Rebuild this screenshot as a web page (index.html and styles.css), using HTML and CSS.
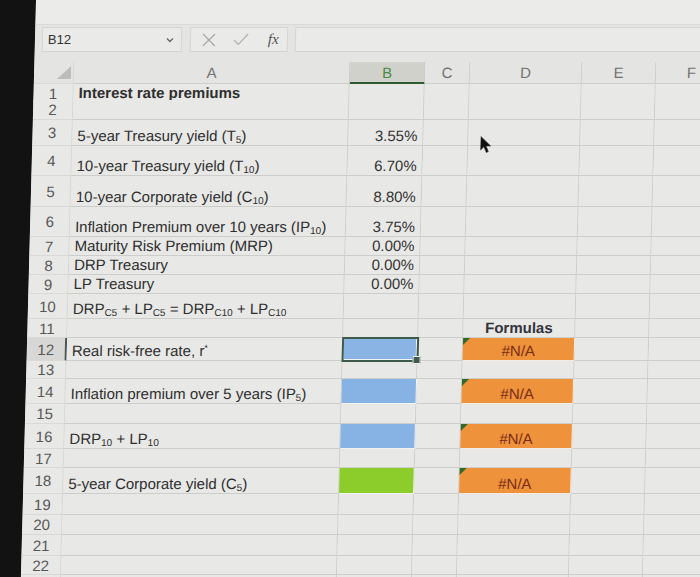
FILE: index.html
```html
<!DOCTYPE html>
<html>
<head>
<meta charset="utf-8">
<link rel="stylesheet" href="styles.css">
</head>
<body>
<div class="screen">
  <div class="ribbon"></div>
  <div class="fbar">
    <div class="namebox"><span>B12</span>
      <svg class="chev" width="8" height="6" viewBox="0 0 8 6"><path d="M1 1.5 L4 4.5 L7 1.5" fill="none" stroke="#666" stroke-width="1.3"/></svg>
    </div>
    <div class="fxbox">
      <svg width="14" height="14" viewBox="0 0 14 14"><path d="M1 1 L13 13 M13 1 L1 13" stroke="#a8a8a6" stroke-width="1.2" fill="none"/></svg>
      <svg width="16" height="13" viewBox="0 0 16 13"><path d="M1 7 L5.5 11.5 L15 1" stroke="#b0b0ae" stroke-width="1.2" fill="none"/></svg>
      <span class="fx">fx</span>
    </div>
    <div class="finput"></div>
  </div>

  <div class="sheet">
    <div class="row hdr">
      <div class="c rh corner"><svg width="14" height="13" viewBox="0 0 14 13"><path d="M14 0 L14 13 L0 13 Z" fill="#bcbcba"/></svg></div>
      <div class="c col">A</div><div class="c col csel">B</div><div class="c col">C</div><div class="c col">D</div><div class="c col">E</div><div class="c col">F</div>
    </div>
    <div class="row h16">
      <div class="c rh">1</div><div class="c"><b>Interest rate premiums</b></div><div class="c"></div><div class="c"></div><div class="c"></div><div class="c"></div><div class="c"></div>
    </div>
    <div class="row h20">
      <div class="c rh">2</div><div class="c"></div><div class="c"></div><div class="c"></div><div class="c"></div><div class="c"></div><div class="c"></div>
    </div>
    <div class="row h26">
      <div class="c rh">3</div><div class="c"><span>5-year Treasury yield (T<sub>5</sub>)</span></div><div class="c num">3.55%</div><div class="c"></div><div class="c"></div><div class="c"></div><div class="c"></div>
    </div>
    <div class="row h30">
      <div class="c rh">4</div><div class="c"><span>10-year Treasury yield (T<sub>10</sub>)</span></div><div class="c num">6.70%</div><div class="c"></div><div class="c"></div><div class="c"></div><div class="c"></div>
    </div>
    <div class="row h31">
      <div class="c rh">5</div><div class="c"><span>10-year Corporate yield (C<sub>10</sub>)</span></div><div class="c num">8.80%</div><div class="c"></div><div class="c"></div><div class="c"></div><div class="c"></div>
    </div>
    <div class="row h30">
      <div class="c rh">6</div><div class="c"><span>Inflation Premium over 10 years (IP<sub>10</sub>)</span></div><div class="c num">3.75%</div><div class="c"></div><div class="c"></div><div class="c"></div><div class="c"></div>
    </div>
    <div class="row h19">
      <div class="c rh">7</div><div class="c">Maturity Risk Premium (MRP)</div><div class="c num">0.00%</div><div class="c"></div><div class="c"></div><div class="c"></div><div class="c"></div>
    </div>
    <div class="row h19">
      <div class="c rh">8</div><div class="c">DRP Treasury</div><div class="c num">0.00%</div><div class="c"></div><div class="c"></div><div class="c"></div><div class="c"></div>
    </div>
    <div class="row h19">
      <div class="c rh">9</div><div class="c">LP Treasury</div><div class="c num">0.00%</div><div class="c"></div><div class="c"></div><div class="c"></div><div class="c"></div>
    </div>
    <div class="row h25">
      <div class="c rh">10</div><div class="c"><span>DRP<sub>C5</sub> + LP<sub>C5</sub> = DRP<sub>C10</sub> + LP<sub>C10</sub></span></div><div class="c"></div><div class="c"></div><div class="c"></div><div class="c"></div><div class="c"></div>
    </div>
    <div class="row h19">
      <div class="c rh">11</div><div class="c"></div><div class="c"></div><div class="c"></div><div class="c mid"><b class="formulas">Formulas</b></div><div class="c"></div><div class="c"></div>
    </div>
    <div class="row h23">
      <div class="c rh rsel">12</div><div class="c"><span>Real risk-free rate, r<sup>*</sup></span></div><div class="c selected"></div><div class="c"></div><div class="c err">#N/A</div><div class="c"></div><div class="c"></div>
    </div>
    <div class="row h18">
      <div class="c rh">13</div><div class="c"></div><div class="c"></div><div class="c"></div><div class="c"></div><div class="c"></div><div class="c"></div>
    </div>
    <div class="row h25">
      <div class="c rh">14</div><div class="c"><span>Inflation premium over 5 years (IP<sub>5</sub>)</span></div><div class="c blue"></div><div class="c"></div><div class="c err">#N/A</div><div class="c"></div><div class="c"></div>
    </div>
    <div class="row h20">
      <div class="c rh">15</div><div class="c"></div><div class="c"></div><div class="c"></div><div class="c"></div><div class="c"></div><div class="c"></div>
    </div>
    <div class="row h25">
      <div class="c rh">16</div><div class="c"><span>DRP<sub>10</sub> + LP<sub>10</sub></span></div><div class="c blue"></div><div class="c"></div><div class="c err">#N/A</div><div class="c"></div><div class="c"></div>
    </div>
    <div class="row h19">
      <div class="c rh">17</div><div class="c"></div><div class="c"></div><div class="c"></div><div class="c"></div><div class="c"></div><div class="c"></div>
    </div>
    <div class="row h26">
      <div class="c rh">18</div><div class="c"><span>5-year Corporate yield (C<sub>5</sub>)</span></div><div class="c green"></div><div class="c"></div><div class="c err">#N/A</div><div class="c"></div><div class="c"></div>
    </div>
    <div class="row h21">
      <div class="c rh">19</div><div class="c"></div><div class="c"></div><div class="c"></div><div class="c"></div><div class="c"></div><div class="c"></div>
    </div>
    <div class="row h20">
      <div class="c rh">20</div><div class="c"></div><div class="c"></div><div class="c"></div><div class="c"></div><div class="c"></div><div class="c"></div>
    </div>
    <div class="row h21">
      <div class="c rh">21</div><div class="c"></div><div class="c"></div><div class="c"></div><div class="c"></div><div class="c"></div><div class="c"></div>
    </div>
    <div class="row h19">
      <div class="c rh">22</div><div class="c"></div><div class="c"></div><div class="c"></div><div class="c"></div><div class="c"></div><div class="c"></div>
    </div>
    <div class="row h20">
      <div class="c rh">23</div><div class="c"></div><div class="c"></div><div class="c"></div><div class="c"></div><div class="c"></div><div class="c"></div>
    </div>
  </div>

  <svg class="cursor" width="12" height="18" viewBox="0 0 12 18"><path d="M0.5 0.5 L0.5 14 L3.8 10.8 L6.3 16.5 L8.3 15.6 L5.9 10 L10.5 10 Z" fill="#111" stroke="#333" stroke-width="0.6"/></svg>
</div>
</body>
</html>
```

FILE: styles.css
```css
* { box-sizing: border-box; }
html, body { margin: 0; height: 100%; }
body {
  background: #121212;
  overflow: hidden;
  font-family: "Liberation Sans", Arial, sans-serif;
}
.screen {
  margin-left: 36px;
  width: 700px;
  height: 577px;
  background: #e6e6e4;
  transform: skewX(-1.5deg);
  transform-origin: 0 0;
  position: relative;
  overflow: hidden;
}
.ribbon {
  height: 25px;
  background: #ebebe9;
  border-bottom: 1px solid #dadad8;
}
.fbar {
  height: 37px;
  display: flex;
  align-items: flex-start;
  padding: 2px 0 0 7px;
  background: #e4e4e2;
}
.namebox, .fxbox, .finput {
  height: 25px;
  background: #eaeae8;
  border: 1px solid #d4d4d2;
}
.namebox {
  width: 140px;
  display: flex;
  align-items: center;
  justify-content: space-between;
  padding: 0 7px 0 5px;
  font-size: 13px;
  color: #333;
}
.fxbox {
  width: 98px;
  margin-left: 8px;
  display: flex;
  align-items: center;
  gap: 17px;
  padding-left: 11px;
}
.fx {
  font-family: "Liberation Serif", "Times New Roman", serif;
  font-style: italic;
  font-size: 15px;
  color: #555;
  margin-left: 2px;
}
.finput { flex: 1; margin-left: 7px; }

.row {
  display: grid;
  grid-template-columns: 40px 276px 75px 45px 112px 74px 72px;
}
.hdr { height: 22px; }
.h16 { height: 16px; }
.h18 { height: 18px; }
.h19 { height: 19px; }
.h20 { height: 20px; }
.h21 { height: 21px; }
.h23 { height: 23px; }
.h25 { height: 25px; }
.h26 { height: 26px; }
.h30 { height: 30px; }
.h31 { height: 31px; }

.c {
  position: relative;
  display: flex;
  align-items: flex-end;
  padding: 0 5px 1px 5px;
  border-right: 1px solid #cdcdcb;
  border-bottom: 1px solid #cdcdcb;
  font-size: 15px;
  line-height: 17px;
  color: #2f2f2f;
  white-space: nowrap;
  background: #e8e8e6;
}
.c.h16 { padding-bottom: 0; }
.c.rh {
  justify-content: center;
  align-items: center;
  padding: 0;
  color: #575757;
  border-right-color: #d6d6d4;
  border-bottom-color: #d9d9d7;
}
.c.rsel {
  background: #d7d7d5;
  border-right: 2px solid #4b564f;
}
.c.corner {
  justify-content: flex-end;
  align-items: flex-end;
  padding: 0 2px 4px 0;
  background: #e4e4e2;
}
.c.col {
  justify-content: center;
  align-items: center;
  padding: 0;
  color: #727272;
  background: #e4e4e2;
  border-bottom-color: #cfcfcd;
}
.c.csel {
  background: #d1d1cc;
  color: #4b8a48;
  border-bottom: 2px solid #2f5a34;
}
.c.num { justify-content: flex-end; padding-right: 5px; color: #333; }
.c.mid { justify-content: center; }
.formulas { color: #33343c; }

sub {
  font-size: 10px;
  vertical-align: -2px;
  line-height: 0;
}
sup {
  font-size: 9px;
  vertical-align: 5px;
  line-height: 0;
}

.c.blue {
  background: #87b3e4;
  border-color: #f2f2f0;
}
.c.green {
  background: #8dcd2b;
  border-color: #f2f2f0;
}
.c.selected {
  background: #89b4e4;
  box-shadow: inset 0 0 0 1px #eef3f6;
  outline: 2px solid #3d5a4a;
  outline-offset: -1px;
  z-index: 1;
}
.c.selected::after {
  content: "";
  position: absolute;
  right: -4px;
  bottom: -4px;
  width: 6px;
  height: 6px;
  background: #3d5a4a;
  border: 1px solid #eeeeee;
}
.c.err {
  background: #ee923c;
  border-color: #f3ece4;
  justify-content: center;
  color: #7a2c14;
}
.c.err::before {
  content: "";
  position: absolute;
  left: 0;
  top: 0;
  border-top: 7px solid #2f6a2a;
  border-right: 7px solid transparent;
}

.cursor {
  position: absolute;
  left: 448px;
  top: 136px;
}
```
